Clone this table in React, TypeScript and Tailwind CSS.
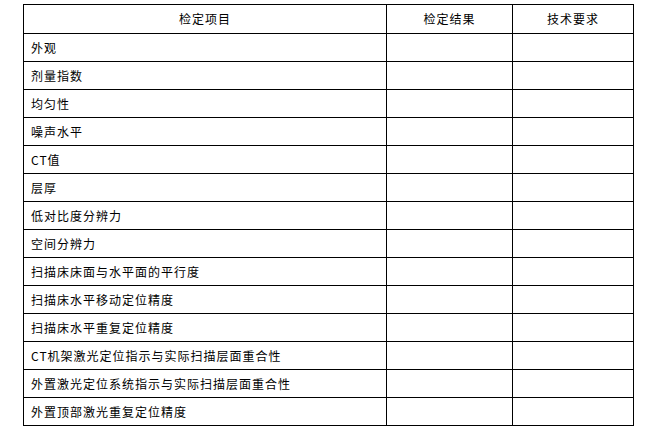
const items = [
  "外观",
  "剂量指数",
  "均匀性",
  "噪声水平",
  "CT值",
  "层厚",
  "低对比度分辨力",
  "空间分辨力",
  "扫描床床面与水平面的平行度",
  "扫描床水平移动定位精度",
  "扫描床水平重复定位精度",
  "CT机架激光定位指示与实际扫描层面重合性",
  "外置激光定位系统指示与实际扫描层面重合性",
  "外置顶部激光重复定位精度",
];

export default function App() {
  return (
    <div
      className="w-[656px] h-[445px] bg-white pl-[23px] pt-[4px]"
      style={{ fontFamily: '"Noto Sans CJK SC", "Noto Sans", sans-serif' }}
    >
      <table className="border-collapse table-fixed w-[610px] text-[12px] tracking-[1px] text-black">
        <colgroup>
          <col className="w-[363px]" />
          <col className="w-[126px]" />
          <col className="w-[121px]" />
        </colgroup>
        <thead>
          <tr className="h-[29px]">
            <th className="border border-black font-normal text-center p-0">检定项目</th>
            <th className="border border-black font-normal text-center p-0">检定结果</th>
            <th className="border border-black font-normal text-center p-0">技术要求</th>
          </tr>
        </thead>
        <tbody>
          {items.map((item) => (
            <tr key={item} className="h-[28px]">
              <td className="border border-black pl-[7px] py-0 leading-none">{item}</td>
              <td className="border border-black p-0"></td>
              <td className="border border-black p-0"></td>
            </tr>
          ))}
        </tbody>
      </table>
    </div>
  );
}
